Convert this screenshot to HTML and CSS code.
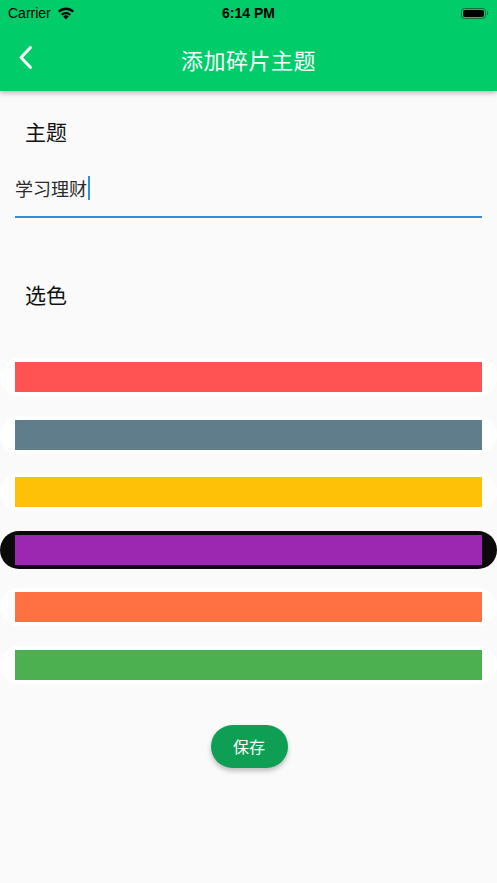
FILE: index.html
```html
<!DOCTYPE html>
<html lang="zh">
<head>
<meta charset="utf-8">
<title>添加碎片主题</title>
<link rel="stylesheet" href="styles.css">
</head>
<body>
<header class="appbar">
  <div class="status">
    <div class="status-left">
      <span class="carrier">Carrier</span>
      <svg class="wifi" width="18" height="14" viewBox="0 0 18 14">
        <path d="M9 13.5 L6.2 10.5 A4 4 0 0 1 11.8 10.5 Z" fill="#000"/>
        <path d="M3.9 8 A7.3 7.3 0 0 1 14.1 8 L12.5 9.7 A5 5 0 0 0 5.5 9.7 Z" fill="#000"/>
        <path d="M1 4.9 A11.2 11.2 0 0 1 17 4.9 L15.4 6.6 A8.9 8.9 0 0 0 2.6 6.6 Z" fill="#000"/>
      </svg>
    </div>
    <span class="time">6:14 PM</span>
    <div class="status-right">
      <span class="battery"><span class="battery-fill"></span></span><span class="battery-nub"></span>
    </div>
  </div>
  <div class="nav">
    <svg class="back" width="16" height="26" viewBox="0 0 16 26">
      <path d="M12.5 2.5 L3 12.5 L12.5 22.5" fill="none" stroke="#fff" stroke-width="3" stroke-linecap="round" stroke-linejoin="round"/>
    </svg>
    <h1 class="title">添加碎片主题</h1>
  </div>
</header>
<main class="content">
  <h2 class="label label-first">主题</h2>
  <div class="field">
    <span class="field-text">学习理财</span><span class="caret"></span>
  </div>
  <h2 class="label label-second">选色</h2>
  <ul class="colors">
    <li class="swatch"><span class="bar red"></span></li>
    <li class="swatch"><span class="bar bluegrey"></span></li>
    <li class="swatch"><span class="bar amber"></span></li>
    <li class="swatch selected"><span class="bar purple"></span></li>
    <li class="swatch"><span class="bar orange"></span></li>
    <li class="swatch"><span class="bar green"></span></li>
  </ul>
  <div class="actions">
    <button class="save" type="button">保存</button>
  </div>
</main>
</body>
</html>
```
FILE: styles.css
```css
html, body {
  margin: 0;
  padding: 0;
}
body {
  width: 497px;
  min-height: 883px;
  background: #fafafa;
  font-family: "Noto Sans CJK SC", "Noto Sans", sans-serif;
  overflow: hidden;
}
.appbar {
  background: #00cc6a;
  height: 91px;
  box-shadow: 0 2px 5px rgba(0, 0, 0, 0.28);
  position: relative;
  z-index: 1;
}
.status {
  height: 26px;
  display: flex;
  align-items: center;
  justify-content: space-between;
  padding: 0 8px;
  position: relative;
}
.status-left {
  display: flex;
  align-items: center;
  gap: 6px;
}
.carrier {
  font-family: "Liberation Sans", Arial, sans-serif;
  font-size: 14px;
  color: #000;
}
.wifi {
  display: block;
}
.time {
  position: absolute;
  left: 0;
  right: 0;
  text-align: center;
  font-family: "Liberation Sans", Arial, sans-serif;
  font-weight: bold;
  font-size: 14px;
  color: #000;
}
.status-right {
  display: flex;
  align-items: center;
  gap: 1px;
  margin-right: 1px;
}
.battery {
  width: 25px;
  height: 11px;
  border: 1px solid #1a6a3a;
  border-radius: 3.5px;
  padding: 1px;
  box-sizing: border-box;
  display: flex;
}
.battery-fill {
  flex: 1;
  background: #000;
  border-radius: 2px;
}
.battery-nub {
  width: 1.5px;
  height: 4px;
  background: #1a6a3a;
  border-radius: 0 1px 1px 0;
}
.nav {
  height: 65px;
  display: flex;
  align-items: center;
  justify-content: center;
  position: relative;
}
.back {
  position: absolute;
  left: 18px;
  top: 19px;
}
.title {
  margin: 0;
  font-weight: normal;
  font-size: 22px;
  color: #fff;
  letter-spacing: 0.5px;
}
.content {
  padding: 0;
}
.label {
  margin: 0;
  padding-left: 25px;
  font-weight: normal;
  font-size: 21px;
  line-height: 30px;
  color: #111;
}
.label-first {
  margin-top: 25px;
}
.field {
  margin: 30px 15px 0;
  padding-bottom: 16px;
  border-bottom: 2px solid #2e8fe0;
  display: flex;
  align-items: center;
  height: 24px;
}
.field-text {
  font-size: 18px;
  line-height: 24px;
  color: #2a2a2a;
}
.caret {
  width: 2px;
  height: 24px;
  background: #2e8fe0;
  margin-left: 1px;
}
.label-second {
  margin-top: 61px;
}
.colors {
  list-style: none;
  margin: 49px 0 0;
  padding: 0;
  display: flex;
  flex-direction: column;
  gap: 19.6px;
}
.swatch {
  background: #fff;
  border-radius: 19px;
  padding: 4px 15px;
  height: 38px;
  box-sizing: border-box;
  display: flex;
}
.swatch.selected {
  background: #0a0a0a;
}
.bar {
  flex: 1;
  display: block;
}
.red { background: #ff5252; }
.bluegrey { background: #607d8b; }
.amber { background: #ffc107; }
.purple { background: #9c27b0; }
.orange { background: #ff7043; }
.green { background: #4caf50; }
.actions {
  display: flex;
  justify-content: center;
  margin-top: 41px;
}
.save {
  width: 77px;
  height: 43px;
  border: none;
  border-radius: 22px;
  background: #0e9f54;
  color: #fff;
  font-family: "Noto Sans CJK SC", "Noto Sans", sans-serif;
  font-size: 16px;
  box-shadow: 0 3px 5px rgba(0, 0, 0, 0.25);
  margin-left: 1px;
}
```
